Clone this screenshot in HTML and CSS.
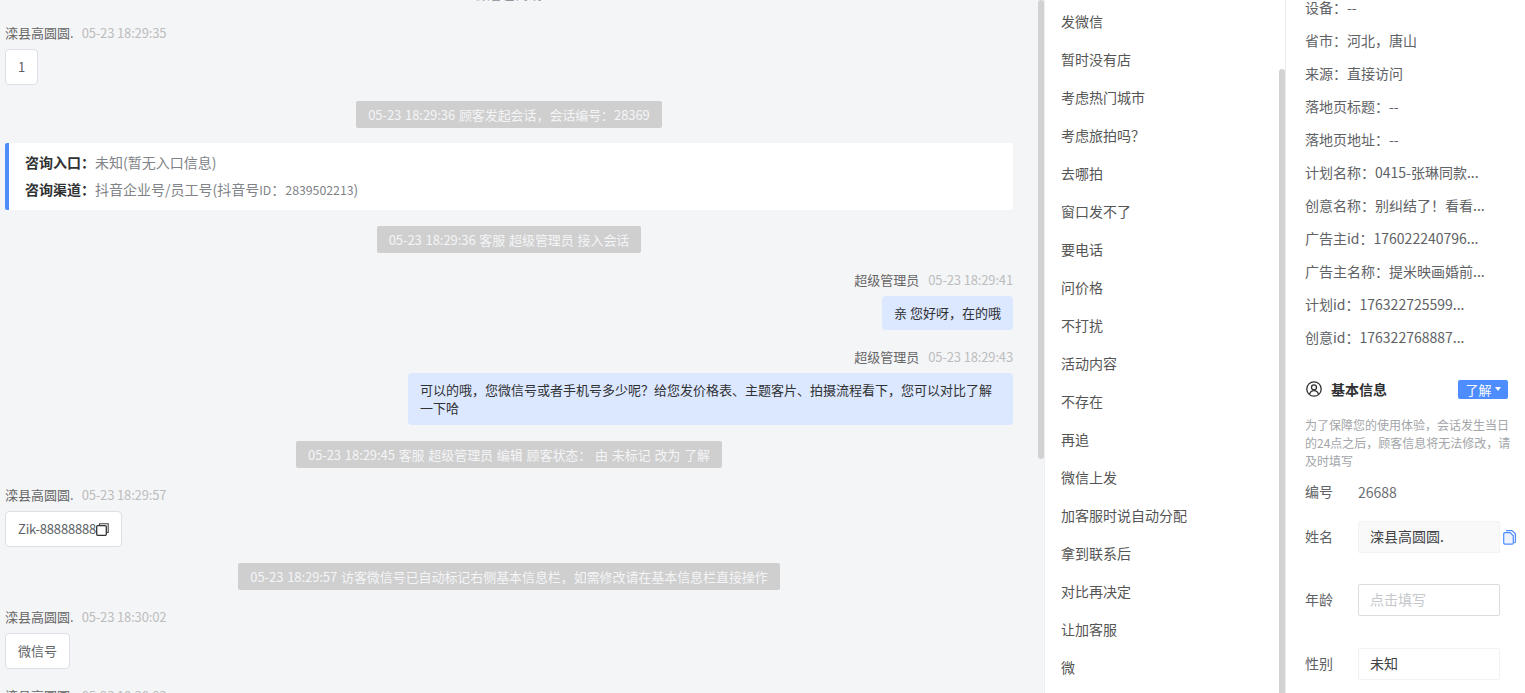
FILE: index.html
```html
<!DOCTYPE html>
<html lang="zh-CN">
<head>
<meta charset="utf-8">
<title>会话详情</title>
<link rel="stylesheet" href="styles.css">
</head>
<body>
<div class="app">
  <section class="chat">
    <div class="chat-scroll">
      <div class="top-note"><span>顾客已离线</span></div>
      <div class="msg">
        <div class="meta"><span class="who">滦县高圆圆.</span><span class="time">05-23 18:29:35</span></div>
        <div class="bubble guest">1</div>
      </div>
      <div class="sys"><span>05-23 18:29:36 顾客发起会话，会话编号：28369</span></div>
      <div class="card">
        <p><b>咨询入口：</b>未知(暂无入口信息)</p>
        <p><b>咨询渠道：</b>抖音企业号/员工号(抖音号<span class="num">ID</span>：<span class="num">2839502213</span>)</p>
      </div>
      <div class="sys"><span>05-23 18:29:36 客服 超级管理员 接入会话</span></div>
      <div class="msg agent">
        <div class="meta"><span class="who">超级管理员</span><span class="time">05-23 18:29:41</span></div>
        <div class="bubble mine">亲 您好呀，在的哦</div>
      </div>
      <div class="msg agent">
        <div class="meta"><span class="who">超级管理员</span><span class="time">05-23 18:29:43</span></div>
        <div class="bubble mine wide">可以的哦，您微信号或者手机号多少呢？给您发价格表、主题客片、拍摄流程看下，您可以对比了解一下哈</div>
      </div>
      <div class="sys"><span>05-23 18:29:45 客服 超级管理员 编辑 顾客状态： 由 未标记 改为 了解</span></div>
      <div class="msg">
        <div class="meta"><span class="who">滦县高圆圆.</span><span class="time">05-23 18:29:57</span></div>
        <div class="bubble guest"><span class="tight">Zik-88888888</span><svg class="copy-small" viewBox="0 0 13 13" width="13" height="13"><path d="M3.5 2.5V.8h8.7v8.7h-1.7" fill="none" stroke="#444" stroke-width="1.1"/><rect x=".7" y="2.7" width="9.6" height="9.6" rx="1" fill="none" stroke="#333" stroke-width="1.3"/></svg></div>
      </div>
      <div class="sys"><span>05-23 18:29:57 访客微信号已自动标记右侧基本信息栏，如需修改请在基本信息栏直接操作</span></div>
      <div class="msg">
        <div class="meta"><span class="who">滦县高圆圆.</span><span class="time">05-23 18:30:02</span></div>
        <div class="bubble guest">微信号</div>
      </div>
      <div class="msg">
        <div class="meta"><span class="who">滦县高圆圆.</span><span class="time">05-23 18:30:03</span></div>
      </div>
    </div>
    <div class="bar"><div class="thumb thumb-chat"></div></div>
  </section>

  <section class="phrases">
    <ul class="phrase-list">
      <li>发微信</li>
      <li>暂时没有店</li>
      <li>考虑热门城市</li>
      <li>考虑旅拍吗？</li>
      <li>去哪拍</li>
      <li>窗口发不了</li>
      <li>要电话</li>
      <li>问价格</li>
      <li>不打扰</li>
      <li>活动内容</li>
      <li>不存在</li>
      <li>再追</li>
      <li>微信上发</li>
      <li>加客服时说自动分配</li>
      <li>拿到联系后</li>
      <li>对比再决定</li>
      <li>让加客服</li>
      <li>微</li>
    </ul>
    <div class="bar bar-list"><div class="thumb thumb-list"></div></div>
  </section>

  <aside class="side">
    <ul class="facts">
      <li>设备：--</li>
      <li>省市：河北，唐山</li>
      <li>来源：直接访问</li>
      <li>落地页标题：--</li>
      <li>落地页地址：--</li>
      <li>计划名称：0415-张琳同款...</li>
      <li>创意名称：别纠结了！看看...</li>
      <li>广告主id：176022240796...</li>
      <li>广告主名称：提米映画婚前...</li>
      <li>计划id：176322725599...</li>
      <li>创意id：176322768887...</li>
    </ul>
    <div class="head">
      <svg class="user-icon" viewBox="0 0 16 16" width="16" height="16"><circle cx="8" cy="8" r="7.2" fill="none" stroke="#303133" stroke-width="1.3"/><circle cx="8" cy="6.3" r="2.5" fill="none" stroke="#303133" stroke-width="1.3"/><path d="M3.6 13c.6-2.2 2.3-3.4 4.4-3.4s3.8 1.2 4.4 3.4" fill="none" stroke="#303133" stroke-width="1.3"/></svg>
      <h3>基本信息</h3>
      <span class="status">了解<i class="caret"></i></span>
    </div>
    <p class="note">为了保障您的使用体验，会话发生当日的24点之后，顾客信息将无法修改，请及时填写</p>
    <div class="row plain"><label>编号</label><span>26688</span></div>
    <div class="row">
      <label>姓名</label>
      <div class="field locked">滦县高圆圆.</div>
      <svg class="copy-blue" viewBox="0 0 13 15" width="13" height="15"><path d="M3 .6h6l3.4 3.2v7.6a1.3 1.3 0 0 1-1.3 1.3" fill="none" stroke="#4d8dff" stroke-width="1.2"/><path d="M1.9 2.6h5.2l3.2 3.2v7.1a1.2 1.2 0 0 1-1.2 1.2H1.9a1.2 1.2 0 0 1-1.2-1.2V3.8a1.2 1.2 0 0 1 1.2-1.2z" fill="#eef2ff" stroke="#4d8dff" stroke-width="1.2"/></svg>
    </div>
    <div class="row"><label>年龄</label><div class="field empty">点击填写</div></div>
    <div class="row last"><label>性别</label><div class="field select">未知</div></div>
  </aside>
</div>
</body>
</html>
```
FILE: styles.css
```css
* { box-sizing: border-box; }
html, body { margin: 0; height: 100%; overflow: hidden; }
body {
  font-family: "Noto Sans CJK SC", "Noto Sans", sans-serif;
  font-size: 13px;
  color: #606266;
  background: #fff;
}
.app {
  display: grid;
  grid-template-columns: 1045px 240px 240px;
  height: 693px;
  overflow: hidden;
}
.chat {
  display: flex;
  background: #f4f5f7;
  border-right: 1px solid #eceef1;
  overflow: hidden;
}
.chat-scroll {
  flex: 1;
  padding: 0 25px 0 5px;
  min-width: 0;
}
.top-note {
  height: 2px;
  overflow: hidden;
  text-align: center;
  margin-bottom: 22px;
  color: #909399;
}
.top-note span { display: block; line-height: 18px; margin-top: -15px; }
.bar { width: 6px; flex: none; }
.thumb { width: 6px; background: #d2d2d2; border-radius: 3px; }
.thumb-chat { height: 459px; }
.msg { display: flex; flex-direction: column; align-items: flex-start; margin-bottom: 16px; }
.msg + .msg, .sys + .msg { margin-top: 18px; }
.meta { line-height: 18px; margin-bottom: 7px; color: #666; white-space: nowrap; }
.time { color: #bdbdbd; margin-left: 8px; letter-spacing: -.15px; }
.agent .time { margin-left: 9px; }
.bubble {
  line-height: 18px;
  padding: 8px 12px;
  border-radius: 4px;
}
.guest {
  display: flex;
  align-items: center;
  background: #fff;
  border: 1px solid #dcdfe6;
  min-height: 36px;
  color: #606266;
}
.tight { letter-spacing: -.17px; }
.mine { background: #dce8ff; color: #303133; }
.wide { width: 605px; }
.agent { align-items: flex-end; }
.sys { text-align: center; margin-bottom: 16px; height: 27px; }
.sys span {
  display: inline-block;
  background: #cfcfcf;
  color: #f4f5f7;
  line-height: 27px;
  padding: 0 12px;
  border-radius: 2px;
  white-space: nowrap;
  word-spacing: 1px;
  letter-spacing: -.07px;
}
.card {
  background: #fff;
  border-left: 4px solid #4d8dff;
  border-radius: 2px;
  height: 67px;
  padding: 6px 16px;
  margin-top: -1px;
  margin-bottom: 16px;
  font-size: 14px;
  color: #808388;
}
.card p { margin: 0; line-height: 27px; }
.card b { color: #303133; font-weight: 700; }
.num { font-size: 12.3px; }
.copy-small { flex: none; }

.phrases {
  display: flex;
  background: #fff;
  overflow: hidden;
}
.phrase-list {
  list-style: none;
  margin: 0;
  padding: 2px 0 0 16px;
  flex: 1;
  font-size: 14px;
  color: #555;
}
.phrase-list li { line-height: 38px; height: 38px; }
.bar-list { padding-top: 69px; }
.thumb-list { height: 640px; }

.side {
  background: #fff;
  border-left: 1px solid #ececec;
  padding: 0 17px 0 19px;
  overflow: hidden;
  font-size: 14px;
}
.facts { list-style: none; margin: -9px 0 0; padding: 0; }
.facts li { line-height: 33px; height: 33px; color: #606266; white-space: nowrap; }
.head {
  display: flex;
  align-items: center;
  height: 20px;
  margin-top: 25px;
  padding-left: 1px;
}
.user-icon { flex: none; margin-right: 9px; }
.head h3 { margin: 0; font-size: 14px; font-weight: 700; color: #303133; flex: 1; }
.status {
  display: inline-flex;
  align-items: center;
  justify-content: center;
  flex: none;
  width: 50px;
  height: 19px;
  font-size: 13px;
  background: #4d8dff;
  color: #fff;
  border-radius: 2px;
}
.caret {
  width: 0; height: 0;
  margin-left: 3px;
  border-left: 3px solid transparent;
  border-right: 3px solid transparent;
  border-top: 4px solid #fff;
}
.note { margin: 17px 0 0; font-size: 12px; line-height: 18px; color: #a3a5a9; width: 208px; }
.row { display: flex; align-items: center; margin-top: 31px; height: 32px; }
.row label { width: 53px; flex: none; color: #606266; margin-bottom: 2px; }
.plain { margin-top: 4px; height: 36px; color: #6b6e73; }
.plain + .row { margin-top: 11px; }
.last { margin-top: 32px; }
.field {
  width: 142px;
  flex: none;
  height: 32px;
  line-height: 28px;
  padding: 0 11px;
  border: 1px solid #f2f2f2;
  border-radius: 2px;
  color: #404245;
}
.locked { background: #f9f9f9; }
.empty { border-color: #dcdcdc; color: #c6c8cc; }
.copy-blue { flex: none; margin-left: 3px; }
```
